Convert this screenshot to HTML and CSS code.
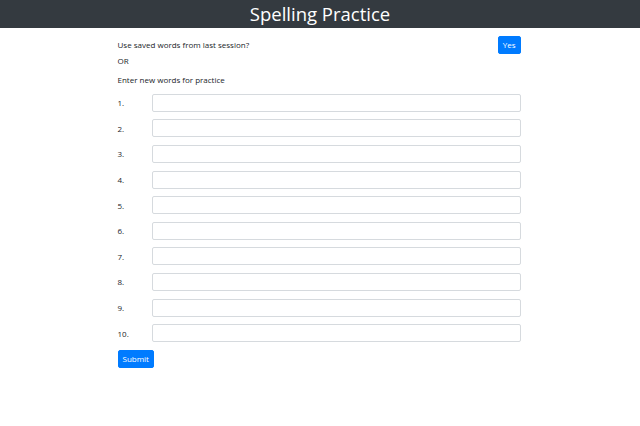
FILE: index.html
```html
<!DOCTYPE html>
<html>
<head>
<meta charset="utf-8">
<link rel="stylesheet" href="styles.css">
</head>
<body>
<header class="topbar"><h1 class="title">Spelling Practice</h1></header>
<main class="container">
  <div class="saved-row">
    <span class="text">Use saved words from last session?</span>
    <button class="btn">Yes</button>
  </div>
  <p class="text or">OR</p>
  <p class="text enter">Enter new words for practice</p>
  <form class="words">
    <div class="row"><label class="num">1.</label><input class="field" type="text"></div>
    <div class="row"><label class="num">2.</label><input class="field" type="text"></div>
    <div class="row"><label class="num">3.</label><input class="field" type="text"></div>
    <div class="row"><label class="num">4.</label><input class="field" type="text"></div>
    <div class="row"><label class="num">5.</label><input class="field" type="text"></div>
    <div class="row"><label class="num">6.</label><input class="field" type="text"></div>
    <div class="row"><label class="num">7.</label><input class="field" type="text"></div>
    <div class="row"><label class="num">8.</label><input class="field" type="text"></div>
    <div class="row"><label class="num">9.</label><input class="field" type="text"></div>
    <div class="row"><label class="num">10.</label><input class="field" type="text"></div>
    <div class="submit-row"><button class="btn" type="button">Submit</button></div>
  </form>
</main>
</body>
</html>
```
FILE: styles.css
```css
* { box-sizing: border-box; }
body {
  margin: 0;
  font-family: "Open Sans", "Noto Sans", sans-serif;
  color: #212529;
  background: #fff;
}
.topbar {
  background: #343a40;
  height: 28px;
  display: flex;
  align-items: center;
  justify-content: center;
}
.title {
  margin: 0;
  color: #fff;
  font-weight: 400;
  font-size: 18.5px;
  line-height: 28px;
}
.container {
  width: 403px;
  margin: 0 auto;
  position: relative;
  left: -1px;
}
.text {
  font-size: 8px;
  margin: 0;
}
.saved-row {
  display: flex;
  justify-content: space-between;
  align-items: flex-start;
  padding-top: 8px;
  height: 27px;
}
.saved-row .text { padding-top: 3px; }
.or { height: 19px; line-height: 12px; }
.enter { height: 16px; line-height: 12px; }
.btn {
  display: block;
  background: #007bff;
  color: #fff;
  border: 1px solid #007bff;
  border-radius: 2px;
  font-family: inherit;
  font-size: 8px;
  height: 18px;
  padding: 0 4px;
  line-height: 16px;
}
.words { display: flex; flex-direction: column; }
.row {
  display: flex;
  align-items: center;
  height: 25.6px;
}
.num {
  width: 34px;
  font-size: 8px;
}
.field {
  flex: 1;
  height: 18px;
  border: 1px solid #d6dade;
  border-radius: 2px;
  margin: 0;
}
.submit-row { display: flex; padding-top: 4px; }
```
